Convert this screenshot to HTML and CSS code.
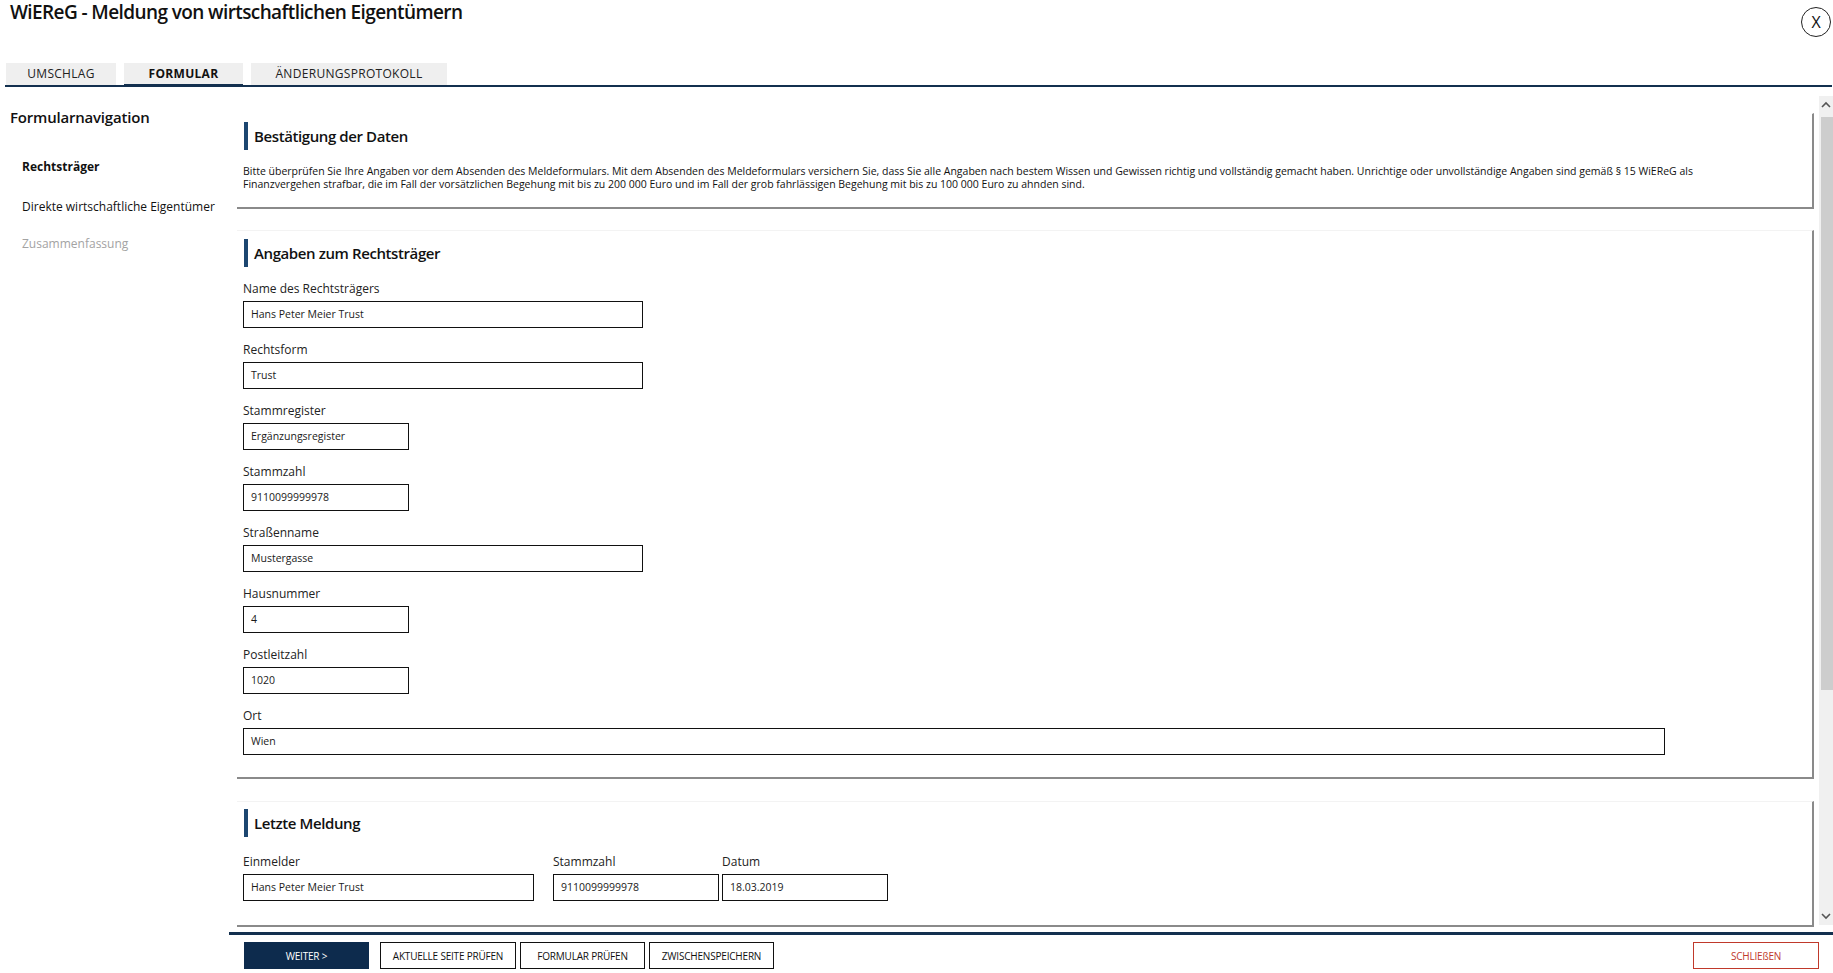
FILE: index.html
```html
<!DOCTYPE html>
<html lang="de">
<head>
<meta charset="utf-8">
<title>WiEReG - Meldung von wirtschaftlichen Eigentümern</title>
<link rel="stylesheet" href="styles.css">
</head>
<body>
<header class="topbar">
  <h1 class="title">WiEReG - Meldung von wirtschaftlichen Eigentümern</h1>
  <button class="close" type="button">X</button>
</header>
<nav class="tabs">
  <div class="tab tab-1">UMSCHLAG</div>
  <div class="tab tab-2 active">FORMULAR</div>
  <div class="tab tab-3">ÄNDERUNGSPROTOKOLL</div>
</nav>
<div class="layout">
  <aside class="sidenav">
    <h2 class="sidenav-title">Formularnavigation</h2>
    <ul class="sidenav-list">
      <li class="nav-item current">Rechtsträger</li>
      <li class="nav-item">Direkte wirtschaftliche Eigentümer</li>
      <li class="nav-item disabled">Zusammenfassung</li>
    </ul>
  </aside>
  <main class="main">
    <div class="scroller">
      <div class="content">
        <section class="card card-confirm">
          <h3 class="card-title">Bestätigung der Daten</h3>
          <p class="card-text">Bitte überprüfen Sie Ihre Angaben vor dem Absenden des Meldeformulars. Mit dem Absenden des Meldeformulars versichern Sie, dass Sie alle Angaben nach bestem Wissen und Gewissen richtig und vollständig gemacht haben. Unrichtige oder unvollständige Angaben sind gemäß § 15 WiEReG als Finanzvergehen strafbar, die im Fall der vorsätzlichen Begehung mit bis zu 200 000 Euro und im Fall der grob fahrlässigen Begehung mit bis zu 100 000 Euro zu ahnden sind.</p>
        </section>
        <section class="card card-entity">
          <h3 class="card-title">Angaben zum Rechtsträger</h3>
          <div class="fields">
            <div class="field"><div class="label">Name des Rechtsträgers</div><div class="input w-l">Hans Peter Meier Trust</div></div>
            <div class="field"><div class="label">Rechtsform</div><div class="input w-l">Trust</div></div>
            <div class="field"><div class="label">Stammregister</div><div class="input w-s">Ergänzungsregister</div></div>
            <div class="field"><div class="label">Stammzahl</div><div class="input w-s">9110099999978</div></div>
            <div class="field"><div class="label">Straßenname</div><div class="input w-l">Mustergasse</div></div>
            <div class="field"><div class="label">Hausnummer</div><div class="input w-s">4</div></div>
            <div class="field"><div class="label">Postleitzahl</div><div class="input w-s">1020</div></div>
            <div class="field"><div class="label">Ort</div><div class="input w-xl">Wien</div></div>
          </div>
        </section>
        <section class="card card-last">
          <h3 class="card-title">Letzte Meldung</h3>
          <div class="row">
            <div class="field"><div class="label">Einmelder</div><div class="input w-m">Hans Peter Meier Trust</div></div>
            <div class="field f-gap"><div class="label">Stammzahl</div><div class="input w-s">9110099999978</div></div>
            <div class="field f-gap-s"><div class="label">Datum</div><div class="input w-s">18.03.2019</div></div>
          </div>
        </section>
      </div>
      <div class="scrollbar">
        <div class="sb-btn">
          <svg width="10" height="7" viewBox="0 0 10 7"><path d="M1 6 L5 2 L9 6" fill="none" stroke="#555" stroke-width="1.6"/></svg>
        </div>
        <div class="sb-track"><div class="sb-thumb"></div></div>
        <div class="sb-btn">
          <svg width="10" height="7" viewBox="0 0 10 7"><path d="M1 1 L5 5 L9 1" fill="none" stroke="#555" stroke-width="1.6"/></svg>
        </div>
      </div>
    </div>
    <footer class="actions">
      <button class="btn btn-primary" type="button">WEITER &gt;</button>
      <button class="btn btn-wide" type="button">AKTUELLE SEITE PRÜFEN</button>
      <button class="btn" type="button">FORMULAR PRÜFEN</button>
      <button class="btn" type="button">ZWISCHENSPEICHERN</button>
      <button class="btn btn-danger" type="button">SCHLIEßEN</button>
    </footer>
  </main>
</div>
</body>
</html>
```
FILE: styles.css
```css
* { box-sizing: border-box; }
html, body { margin: 0; padding: 0; }
body {
  width: 1833px;
  height: 973px;
  overflow: hidden;
  background: #fff;
  color: #111;
  font-family: "Open Sans", "Liberation Sans", sans-serif;
}

/* header */
.topbar {
  height: 63px;
  display: flex;
  justify-content: space-between;
  align-items: flex-start;
}
.title {
  margin: 0;
  padding-left: 10px;
  font-size: 19px;
  line-height: 24px;
  font-weight: 600;
  letter-spacing: -0.6px;
  color: #111;
}
.close {
  margin: 7px 2px 0 0;
  width: 30px;
  height: 30px;
  border-radius: 50%;
  border: 1px solid #222;
  background: #fff;
  font-family: "Open Sans", "Liberation Sans", sans-serif;
  font-size: 16px;
  line-height: 1;
  padding: 0;
  color: #111;
}

/* tabs */
.tabs {
  margin: 0 1px 0 5px;
  height: 24px;
  display: flex;
  gap: 8px;
  border-bottom: 2px solid #13304f;
}
.tab {
  height: 22px;
  background: #efefef;
  font-size: 12px;
  letter-spacing: 0.3px;
  line-height: 22px;
  text-align: center;
  color: #222;
}
.tab-1 { width: 110px; margin-left: 1px; }
.tab-2 { width: 119px; }
.tab-3 { width: 196px; }
.tab.active {
  font-weight: 700;
  color: #111;
  box-shadow: inset 0 -3px 0 #13304f;
  height: 24px;
}

/* layout */
.layout {
  display: grid;
  grid-template-columns: 229px 1fr;
  height: 886px;
}
.sidenav { padding-left: 10px; }
.sidenav-title {
  margin: 20px 0 0 0;
  font-size: 15px;
  line-height: 20px;
  font-weight: 600;
  letter-spacing: -0.2px;
}
.sidenav-list {
  list-style: none;
  margin: 32px 0 0 12px;
  padding: 0;
}
.nav-item {
  font-size: 12px;
  line-height: 16px;
  margin-bottom: 24px;
  color: #111;
}
.nav-item:nth-child(2) { margin-bottom: 21px; }
.nav-item.current { font-weight: 700; }
.nav-item.disabled { color: #a3a3a3; }

.main {
  display: flex;
  flex-direction: column;
}
.scroller {
  margin-top: 9px;
  height: 836px;
  display: flex;
  overflow: hidden;
}
.content {
  flex: 1;
  padding: 17px 5px 0 8px;
  overflow: hidden;
}

/* cards */
.card {
  background: #fff;
  border-top: 1px solid #f3f3f3;
  border-right: 2px solid #8a8a8a;
  border-bottom: 2px solid #8a8a8a;
  padding: 8px 0 0 6px;
}
.card-title {
  margin: 0 0 0 1px;
  height: 28px;
  line-height: 28px;
  border-left: 4px solid #1c4670;
  padding-left: 6px;
  font-size: 15px;
  font-weight: 600;
  letter-spacing: -0.4px;
  color: #111;
}
.card-confirm { padding-bottom: 16px; margin-bottom: 21px; border-top-color: #fff; }
.card-text {
  margin: 15px 0 0 0;
  font-size: 10.5px;
  line-height: 13px;
  color: #111;
  padding-right: 90px;
}
.card-entity { padding-bottom: 22px; margin-bottom: 22px; }
.card-last { padding-bottom: 24px; padding-top: 7px; }

.fields { margin-top: 14px; }
.field { margin-bottom: 14px; }
.fields .field:last-child { margin-bottom: 0; }
.label {
  font-size: 12px;
  line-height: 16px;
  margin-bottom: 4px;
  color: #222;
}
.input {
  height: 27px;
  border: 1px solid #111;
  padding-left: 7px;
  font-size: 10.5px;
  line-height: 25px;
  color: #1a1a1a;
  background: #fff;
}
.w-l { width: 400px; }
.w-s { width: 166px; }
.w-m { width: 291px; }
.w-xl { width: 1422px; }

.row {
  display: flex;
  margin-top: 17px;
}
.row .field { margin-bottom: 0; }
.f-gap { margin-left: 19px; }
.f-gap-s { margin-left: 3px; }

/* scrollbar */
.scrollbar {
  width: 14px;
  margin-bottom: 7px;
  background: #f0f0f0;
  display: flex;
  flex-direction: column;
}
.sb-btn {
  height: 17px;
  display: flex;
  align-items: center;
  justify-content: center;
}
.sb-track { flex: 1; }
.sb-thumb {
  margin: 4px 0 0 2px;
  height: 573px;
  background: #cdcdcd;
}

/* footer */
.actions {
  flex: 1;
  border-top: 3px solid #13304f;
  padding: 7px 14px 0 15px;
  display: flex;
  align-items: flex-start;
}
.btn {
  height: 27px;
  width: 125px;
  margin-right: 4px;
  border: 1px solid #111;
  background: #fff;
  padding: 0;
  font-family: "Open Sans", "Liberation Sans", sans-serif;
  font-size: 10px;
  letter-spacing: -0.2px;
  color: #111;
}
.btn-primary {
  background: #0d2b4d;
  border-color: #0d2b4d;
  color: #fff;
  margin-right: 11px;
}
.btn-wide { width: 136px; }
.btn-danger {
  margin-left: auto;
  margin-right: 0;
  width: 126px;
  border-color: #c0392b;
  color: #c0392b;
}
```
